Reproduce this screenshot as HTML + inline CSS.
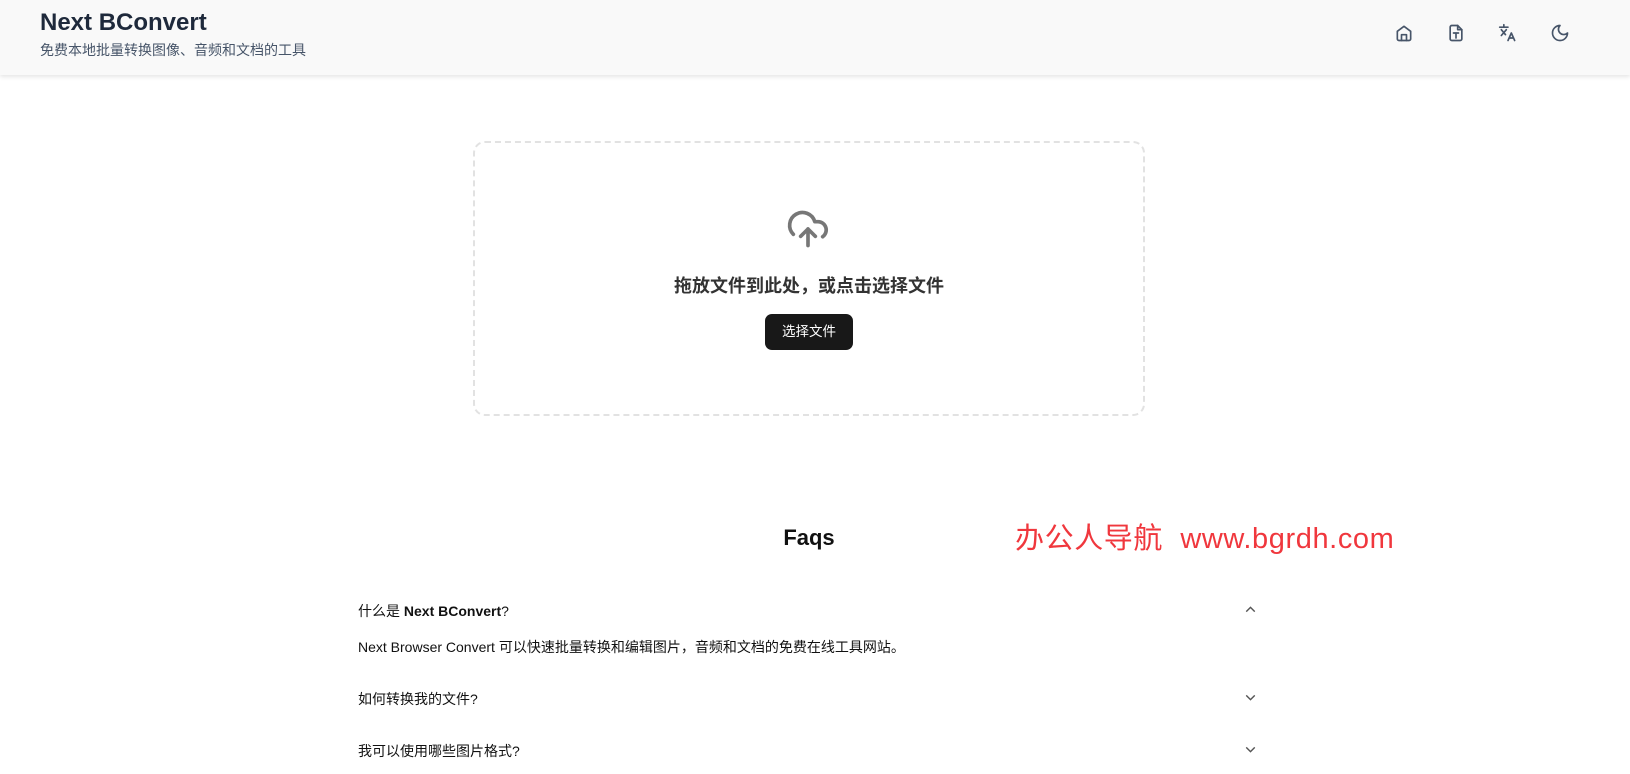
<!DOCTYPE html>
<html><head><meta charset="utf-8"><style>
*{margin:0;padding:0;box-sizing:border-box}
body{width:1630px;height:774px;overflow:hidden;background:#fff;font-family:"Liberation Sans","Noto Sans CJK SC",sans-serif;color:#111}
.hd{position:absolute;left:0;top:0;width:1630px;height:75px;background:#f9f9f9;box-shadow:0 2px 4px rgba(0,0,0,.1)}
.t{position:absolute;left:40px;top:9px;font-size:24px;font-weight:bold;color:#1e293b}
.s{position:absolute;left:40px;top:40px;font-size:14px;color:#475569}
.ic{position:absolute;top:23px;width:20px;height:20px}
.dz{position:absolute;left:473px;top:141px;width:672px;height:275px;border:2px dashed #e2e2e2;border-radius:12px}
.ab{position:absolute;font-size:14px;color:#111}
.ch{position:absolute;left:1242px;width:17px;height:17px}
</style></head><body>
<div class="hd">
<div class="t">Next BConvert</div>
<div class="s">免费本地批量转换图像、音频和文档的工具</div>
<svg class="ic" style="left:1394px" viewBox="0 0 24 24" fill="none" stroke="#475569" stroke-width="2" stroke-linecap="round" stroke-linejoin="round"><path d="M4 10l8-6 8 6v9a2 2 0 0 1-2 2H6a2 2 0 0 1-2-2z"/><path d="M9 21v-7h6v7"/></svg>
<svg class="ic" style="left:1446px" viewBox="0 0 24 24" fill="none" stroke="#475569" stroke-width="2" stroke-linecap="round" stroke-linejoin="round"><path d="M14 3H7a2 2 0 0 0-2 2v14a2 2 0 0 0 2 2h10a2 2 0 0 0 2-2V8z"/><path d="M14 3v5h5"/><path d="M9 12h6M12 12v6"/></svg>
<svg class="ic" style="left:1498px" viewBox="0 0 24 24" fill="none" stroke="#475569" stroke-width="2" stroke-linecap="round" stroke-linejoin="round"><path d="M2 5h10M7 2v3M4 8l5 6M10 8l-6 7"/><path d="M12 21l4-9 4 9M14 18h4"/></svg>
<svg class="ic" style="left:1550px" viewBox="0 0 24 24" fill="none" stroke="#475569" stroke-width="2" stroke-linecap="round" stroke-linejoin="round"><path d="M12 3a6 6 0 0 0 9 9 9 9 0 1 1-9-9z"/></svg>
</div>
<div class="dz"></div>
<svg style="position:absolute;left:786px;top:207px" width="44" height="44" viewBox="0 0 24 24" fill="none" stroke="#777" stroke-width="2" stroke-linecap="round" stroke-linejoin="round"><path d="M4 14.9A7 7 0 1 1 15.7 8h1.8a4.5 4.5 0 0 1 2.5 8.2"/><path d="M12 12v9M8 16l4-4 4 4"/></svg>
<div style="position:absolute;left:473px;width:672px;top:272px;text-align:center;font-size:18px;font-weight:bold;color:#333">拖放文件到此处，或点击选择文件</div>
<div style="position:absolute;left:765px;top:314px;width:88px;height:36px;background:#181818;border-radius:7px;color:#fff;font-size:13.5px;text-align:center;line-height:36px">选择文件</div>
<div style="position:absolute;left:700px;width:218px;top:525px;text-align:center;font-size:22px;font-weight:bold">Faqs</div>
<div style="position:absolute;left:1015px;top:515px;font-size:29px;color:#f0373d;white-space:nowrap;letter-spacing:0.6px">办公人导航&nbsp; www.bgrdh.com</div>
<div class="ab" style="left:358px;top:601px">什么是 <b>Next BConvert</b>?</div>
<svg class="ch" style="top:601px" viewBox="0 0 24 24" fill="none" stroke="#555" stroke-width="2"><path d="M6 15l6-6 6 6"/></svg>
<div class="ab" style="left:358px;top:637px">Next Browser Convert 可以快速批量转换和编辑图片，音频和文档的免费在线工具网站。</div>
<div class="ab" style="left:358px;top:689px">如何转换我的文件?</div>
<svg class="ch" style="top:689px" viewBox="0 0 24 24" fill="none" stroke="#555" stroke-width="2"><path d="M6 9l6 6 6-6"/></svg>
<div class="ab" style="left:358px;top:741px">我可以使用哪些图片格式?</div>
<svg class="ch" style="top:741px" viewBox="0 0 24 24" fill="none" stroke="#555" stroke-width="2"><path d="M6 9l6 6 6-6"/></svg>
</body></html>
